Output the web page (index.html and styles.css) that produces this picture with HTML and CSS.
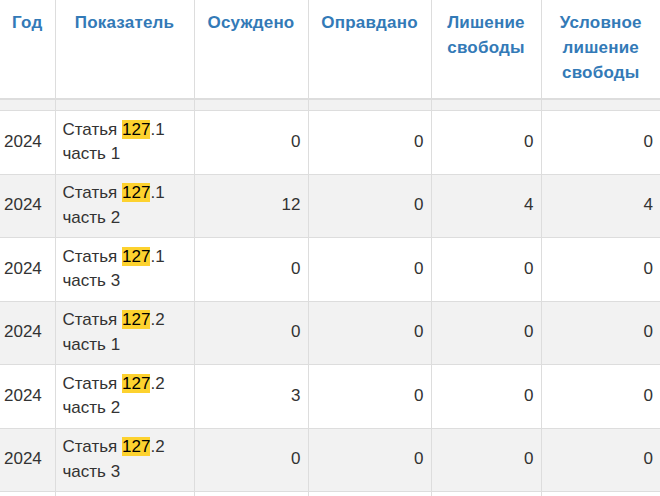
FILE: index.html
```html
<!DOCTYPE html>
<html lang="ru">
<head>
<meta charset="utf-8">
<link rel="stylesheet" href="styles.css">
</head>
<body>
<table class="stats">
  <colgroup>
    <col class="c-year"><col class="c-name"><col class="c-num1"><col class="c-num2"><col class="c-num3"><col class="c-num4">
  </colgroup>
  <thead>
    <tr>
      <th>Год</th>
      <th>Показатель</th>
      <th>Осуждено</th>
      <th>Оправдано</th>
      <th>Лишение свободы</th>
      <th>Условное лишение свободы</th>
    </tr>
  </thead>
  <tbody>
    <tr class="spacer"><td></td><td></td><td></td><td></td><td></td><td></td></tr>
    <tr><td class="year">2024</td><td class="name">Статья <mark>127</mark>.1<br>часть 1</td><td class="num">0</td><td class="num">0</td><td class="num">0</td><td class="num">0</td></tr>
    <tr><td class="year">2024</td><td class="name">Статья <mark>127</mark>.1<br>часть 2</td><td class="num">12</td><td class="num">0</td><td class="num">4</td><td class="num">4</td></tr>
    <tr><td class="year">2024</td><td class="name">Статья <mark>127</mark>.1<br>часть 3</td><td class="num">0</td><td class="num">0</td><td class="num">0</td><td class="num">0</td></tr>
    <tr><td class="year">2024</td><td class="name">Статья <mark>127</mark>.2<br>часть 1</td><td class="num">0</td><td class="num">0</td><td class="num">0</td><td class="num">0</td></tr>
    <tr><td class="year">2024</td><td class="name">Статья <mark>127</mark>.2<br>часть 2</td><td class="num">3</td><td class="num">0</td><td class="num">0</td><td class="num">0</td></tr>
    <tr><td class="year">2024</td><td class="name">Статья <mark>127</mark>.2<br>часть 3</td><td class="num">0</td><td class="num">0</td><td class="num">0</td><td class="num">0</td></tr>
    <tr class="tail"><td></td><td></td><td></td><td></td><td></td><td></td></tr>
  </tbody>
</table>
</body>
</html>
```
FILE: styles.css
```css
html, body {
  margin: 0;
  padding: 0;
  background: #fff;
}
body {
  font-family: "Liberation Sans", Arial, sans-serif;
  font-size: 17px;
  line-height: 24.75px;
  color: #333;
  overflow: hidden;
}
.stats {
  width: 660px;
  border-collapse: collapse;
  table-layout: fixed;
}
.c-year { width: 55px; }
.c-name { width: 139px; }
.c-num1 { width: 114px; }
.c-num2 { width: 123px; }
.c-num3 { width: 110px; }
.c-num4 { width: 119px; }

.stats th {
  color: #337ab7;
  font-weight: bold;
  letter-spacing: 0.2px;
  text-align: center;
  vertical-align: top;
  padding: 11px 7px 12.75px;
  border-left: 1px solid #ddd;
  border-bottom: 2px solid #ddd;
}
.stats td {
  padding: 6.5px 7px;
  border-left: 1px solid #ddd;
  border-top: 1px solid #ddd;
  vertical-align: middle;
}
.stats th:first-child,
.stats td:first-child {
  border-left: none;
}
.stats tbody tr:nth-child(odd) td {
  background: #f2f2f2;
}
.stats .spacer td {
  height: 10px;
  padding: 0;
  border-top: none;
}
.stats .tail td {
  height: 50px;
}
.stats .year {
  padding-left: 4px;
}
.num {
  text-align: right;
}
mark {
  background: #fdd22f;
  color: #000;
  padding: 0;
}
```
